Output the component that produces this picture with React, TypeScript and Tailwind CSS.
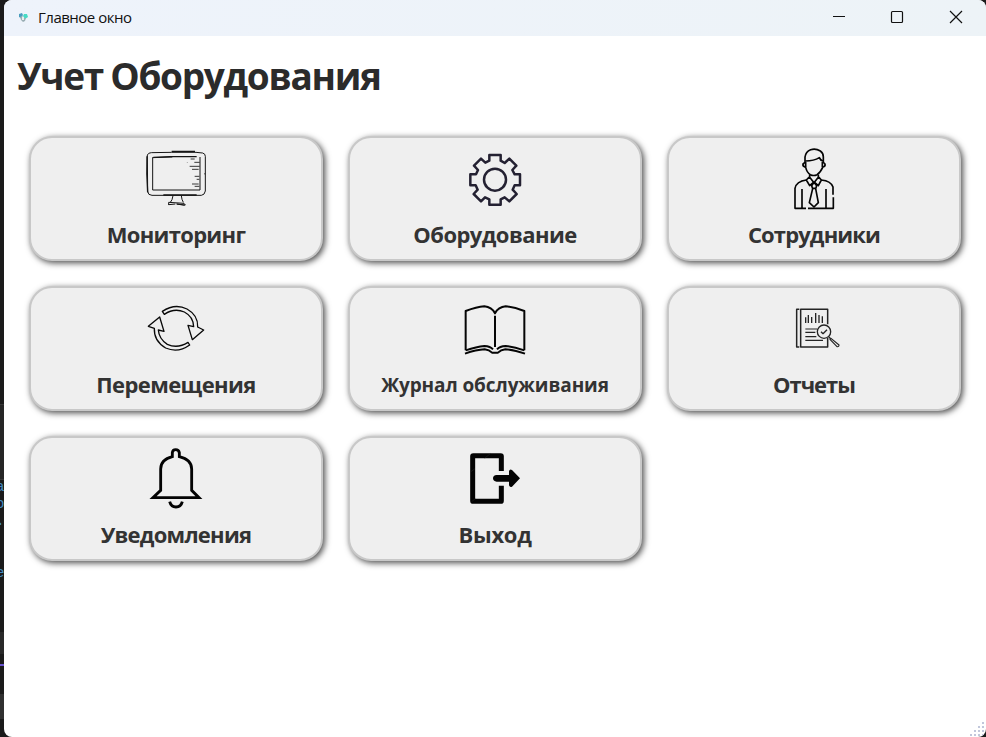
import type { ReactNode } from "react";

type Tile = { label: string; text: string; box: string; art: ReactNode };

const tiles: Tile[] = [
  {
    label: "Мониторинг",
    text: "h-10 text-[22px] tracking-[-0.7px]",
    box: "333 39 270 228",
    art: (
      <g stroke="#151515" strokeWidth="3">
        <path d="M382 90q3-7 12-7l60-1 74 0 20 2q8 2 8 10v104q-2 12-12 13H396q-12 0-13-12z" />
        <path d="M381 94q-2 50 2 108M455 79h70M400 97l50-2 80 0M430 210h100" strokeWidth="4" />
        <path d="M398 98v97h142V96M397 98l60-2M502 112v1" />
        <path d="M512 102h12M523 112h16M509 124h30M516 133h20M524 154h14M530 163h8M516 177h20M524 184h14M554 145v3" strokeWidth="2.5" />
        <path d="M459 212q-2 14-8 20M484 212q1 12 6 20" />
        <path d="M446 240v-8l46 3 4 5-26-3 24 4M446 239l20-2" />
      </g>
    ),
  },
  {
    label: "Оборудование",
    text: "h-10 text-[22px] tracking-[-0.55px]",
    box: "0 -6 270 228",
    art: (
      <g stroke="#242132" strokeWidth="7.5">
        <circle cx="135" cy="119" r="33" />
        <path d="M118 45h34v17l12 7 14-13 21 21-12 13 7 13h16v33h-16l-6 13 12 13-22 22-14-12-12 6v16h-34v-16l-13-6-12 12-22-22 12-13-6-13H61v-33h17l6-13-12-13 21-21 13 12 12-6z" />
      </g>
    ),
  },
  {
    label: "Сотрудники",
    text: "h-10 text-[22px] tracking-[-0.85px]",
    box: "-3 -6 270 228",
    art: (
      <g stroke="#050505" strokeWidth="5">
        <path d="M105 67V51q2-16 17-22 15-5 29 4 9 6 9 18v16l5 5q2 7-7 10-7 16-17 22-10 5-20 0-10-6-14-22-10-3-8-10z" />
        <path d="M106 63q26 0 42-10 3 8 11 10M107 66v15M157 66v15" />
        <path d="M119 104v8l13 16 13-16v-8M119 110l-10 10 10 17 13-11 13 11 9-17-9-10" />
        <path d="M109 120q-30 4-34 25v60h33M154 120q29 3 35 21v23M190 172v33h-76M96 147v56M168 147v56" />
        <path d="M132 127l-7 10 3 9-10 42 14 13 13-13-8-42 3-9zM127 145h11" />
      </g>
    ),
  },
  {
    label: "Перемещения",
    text: "h-10 text-[22px] tracking-[-0.6px]",
    box: "3 -6 270 228",
    art: (
      <g stroke="#090909" strokeWidth="4">
        <path d="M97 64Q135 39 171 57 205 76 203 111L221 120 187 149 174 106 191 110Q190 80 163 66 133 53 103 73z" />
        <path d="M179 165Q144 190 107 174 71 153 73 115L55 109 89 81 102 124 85 120Q87 147 112 163 143 177 174 157z" />
      </g>
    ),
  },
  {
    label: "Журнал обслуживания",
    text: "h-[42px] pt-px text-[19px] tracking-[-0.1px]",
    box: "0 -6 270 228",
    art: (
      <g stroke="#050505" strokeWidth="6">
        <path d="M47 181V63q33-12 56-14 22 2 32 21 10-19 32-21 23 2 56 14v118M135 77v94" />
        <path d="M47 181q33-11 56-13 18 1 26 10M223 181q-33-11-56-13-18 1-26 10" />
        <path d="M45 191q34-12 59-13 14 2 22 10h18q8-8 22-10 25 1 59 13" />
      </g>
    ),
  },
  {
    label: "Отчеты",
    text: "h-10 text-[22px] tracking-[-1px]",
    box: "-3 -6 270 228",
    art: (
      <g stroke="#242424" strokeWidth="4.5">
        <path d="M88 58h-8v113h8M173 103V58H92v113h81v-27" />
        <path d="M107 99V82M115 99V75M125 99V81M137 99V69M147 99V75M157 99V79" strokeWidth="4" />
        <path d="M106 117h35M106 127h30M106 140h33M106 151h53" strokeWidth="3.5" />
        <circle cx="162" cy="125" r="20" fill="#efefef" strokeWidth="4" />
        <path d="M153 125l6 6 12-12M176 140l6 6" strokeWidth="4" />
        <path d="M183 145l24 20q0 6-6 5l-21-22z" strokeWidth="3.5" />
      </g>
    ),
  },
  {
    label: "Уведомления",
    text: "h-10 text-[22px] tracking-[-0.75px]",
    box: "3 -6 270 228",
    art: (
      <g stroke="#030303" strokeWidth="8.5" strokeLinejoin="miter">
        <path d="M127 50V38q1-9 10-9t11 9v12q37 9 37 37v64l22 22H69l23-22V87q0-28 35-37z" />
        <path d="M119 185q4 16 19 16t19-16" />
      </g>
    ),
  },
  {
    label: "Выход",
    text: "h-10 text-[22px] tracking-[-0.3px]",
    box: "0 -6 270 228",
    art: (
      <g>
        <path d="M154 93V49q0-2-2-2H70q-2 0-2 2v133q0 2 2 2h82q2 0 2-2v-45" stroke="#030303" strokeWidth="15" />
        <path d="M140 105h37V94q2-8 9-4l24 25-24 25q-6 4-9-4v-11h-37q-11-1-11-10t11-10z" fill="#030303" />
        <path d="M104 55l18-15M60 97l15-11M65 185l11-9" stroke="#292929" strokeWidth="1.5" />
      </g>
    ),
  },
];

const gripDots = [
  [12, 0], [12, 4], [8, 4], [12, 8], [8, 8], [4, 8], [12, 12], [8, 12], [4, 12], [0, 12],
];

function TileButton({ tile }: { tile: Tile }) {
  return (
    <button className="flex h-[125px] w-[294px] flex-col items-center rounded-[23px] border-2 border-[#c8c8c8] bg-[#efefef] shadow-[2px_2px_6px_rgba(0,0,0,0.7)]">
      <svg className="h-[76px] w-[90px] shrink-0" viewBox={tile.box} fill="none" strokeLinejoin="round">
        {tile.art}
      </svg>
      <span className={`flex shrink-0 items-center whitespace-nowrap font-bold text-[#333] ${tile.text}`}>
        {tile.label}
      </span>
    </button>
  );
}

export default function App() {
  return (
    <div className="relative h-[737px] w-[986px] overflow-hidden bg-[#1b1b1b] pl-1 font-['Open_Sans','Noto_Sans',sans-serif]">
      <div className="absolute left-0 top-[390px] h-[347px] w-1 overflow-hidden font-['Liberation_Mono',monospace] text-[14px] leading-none text-[#438bc0]">
        <div className="absolute top-[14px] h-[76px] w-1 border-y border-[#383838] bg-[#262626]" />
        <span className="absolute -left-1 top-[90px]">a</span>
        <span className="absolute -left-1 top-[107px]">о</span>
        <span className="absolute -left-1 top-[124px]">.</span>
        <span className="absolute -left-1 top-[176px]">е</span>
        <div className="absolute top-[242px] h-[22px] w-1 bg-[#292929]" />
        <div className="absolute top-[274px] h-[2px] w-1 bg-[#6852cf]" />
        <div className="absolute top-[304px] h-[25px] w-1 bg-[#303030]" />
      </div>
      <main className="relative h-full w-[982px] overflow-hidden rounded-lg bg-white">
        <header className="flex h-9 items-center bg-gradient-to-r from-[#eef3fb] to-[#edf3f7] pl-[15px]">
          <svg width="9" height="10" viewBox="0 0 9 10" className="shrink-0">
            <path d="M0 1L3 0 4 2 2 5 0 4z" fill="#4a9dbe" />
            <path d="M5 1L8 1 9 4 6 6 4 3z" fill="#48dbc5" />
            <path d="M1 4L3 3 5 5 7 5 6 8 4 9 2 7z" fill="#9aaeb4" />
            <path d="M3 4h2v3H3z" fill="#e9eeee" />
          </svg>
          <span className="mb-[2px] ml-[10px] text-[15px] tracking-[-0.5px] text-[#111]">Главное окно</span>
          <svg width="140" height="36" viewBox="825 0 140 36" className="ml-auto mr-[21px]" fill="none" stroke="#111">
            <path d="M833 16.5h12" />
            <rect x="891.5" y="11.5" width="11" height="11" rx="1" strokeWidth="1.2" />
            <path d="M950 11l12 12M962 11l-12 12" strokeWidth="1.2" />
          </svg>
        </header>
        <h1 className="ml-[13px] mt-3 h-[56px] whitespace-nowrap text-[37px] font-bold leading-[55px] tracking-[-1.3px] text-[#2b2b2b] [word-spacing:-1px]">
          Учет Оборудования
        </h1>
        <div className="ml-[25px] mt-8 grid w-max grid-cols-3 gap-[25px]">
          {tiles.map((tile) => (
            <TileButton key={tile.label} tile={tile} />
          ))}
        </div>
        <svg className="absolute bottom-0 right-0 h-[15px] w-4" viewBox="0 0 16 15">
          {gripDots.map(([x, y]) => (
            <rect key={`${x}-${y}`} x={x} y={y} width="2" height="2" fill="#c1c7db" />
          ))}
        </svg>
      </main>
    </div>
  );
}
